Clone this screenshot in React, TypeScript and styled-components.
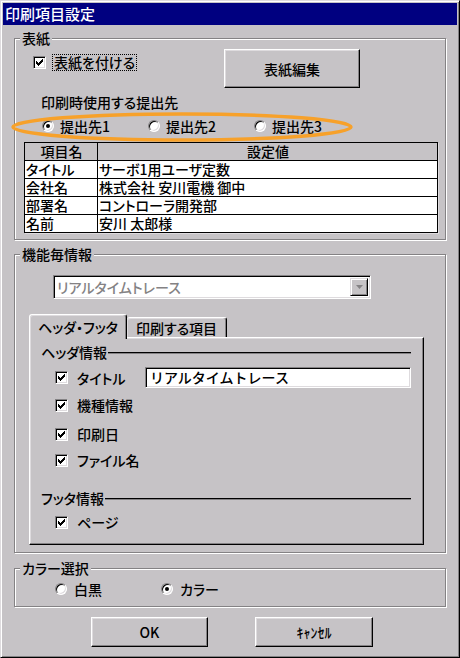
import { Fragment } from "react";
import styled, { createGlobalStyle } from "styled-components";

const FACE = "#c6c3c6";
const SHADOW = "#848284";
const LIGHT = "#dedbde";

const GlobalStyle = createGlobalStyle`
  html, body { margin: 0; padding: 0; background: ${FACE}; }
  * { box-sizing: border-box; }
`;

const Window = styled.div`
  width: 460px;
  height: 658px;
  padding: 2px;
  background: ${FACE};
  border: 1px solid;
  border-color: ${LIGHT} #000 #000 ${LIGHT};
  box-shadow: inset 1px 1px 0 #fff, inset -1px -1px 0 ${SHADOW};
  font-family: "Noto Sans CJK JP", "Noto Sans", sans-serif;
  font-size: 14px;
  font-weight: 500;
  line-height: 16px;
  color: #000;
  font-feature-settings: "palt";
  display: flex;
  flex-direction: column;
`;

const TitleBar = styled.div`
  height: 22px;
  background: #000080;
  color: #fff;
  font-size: 15px;
  display: flex;
  align-items: center;
  padding-left: 2px;
`;

const Body = styled.div`
  display: flex;
  flex-direction: column;
  padding-left: 11px;
`;

const Group = styled.div<{ $mt: number; $h: number }>`
  position: relative;
  margin-top: ${(p) => p.$mt}px;
  height: ${(p) => p.$h}px;
  width: 432px;
  border: 1px solid ${SHADOW};
  box-shadow: inset 1px 1px 0 #fff, 1px 1px 0 #fff;
  display: flex;
  flex-direction: column;
  align-items: flex-start;
`;

const GroupLabel = styled.div`
  margin: -9px 0 0 5px;
  padding: 0 2px;
  background: ${FACE};
  line-height: 16px;
`;

const CoverRow = styled.div`
  display: flex;
  justify-content: space-between;
  align-items: flex-start;
  width: 100%;
  margin-top: 3px;
  padding: 0 85px 0 18px;
`;

const CheckLabel = styled.label<{ $gap: number; $mt?: number }>`
  display: inline-flex;
  align-items: center;
  gap: ${(p) => p.$gap}px;
  margin-top: ${(p) => p.$mt ?? 0}px;
`;

const FocusText = styled.span`
  border: 1px dotted #000;
  padding: 0 1px;
  line-height: 15px;
`;

const Box = styled.span`
  flex: none;
  width: 13px;
  height: 13px;
  background: #fff;
  border: 1px solid;
  border-color: ${SHADOW} #fff #fff ${SHADOW};
  box-shadow: inset 1px 1px 0 #000, inset -1px -1px 0 ${LIGHT};
  display: flex;
  align-items: center;
  justify-content: center;
`;

const PushButton = styled.button<{ $w: number; $h: number }>`
  width: ${(p) => p.$w}px;
  height: ${(p) => p.$h}px;
  padding: 0;
  font: inherit;
  color: #000;
  background: ${FACE};
  border: 1px solid;
  border-color: #fff #000 #000 #fff;
  box-shadow: inset -1px -1px 0 ${SHADOW}, inset 1px 1px 0 ${LIGHT};
`;

const SubLabel = styled.div`
  margin-top: 6px;
  padding-left: 26px;
`;

const RadioRow = styled.div<{ $mt: number; $pl: number }>`
  display: flex;
  margin-top: ${(p) => p.$mt}px;
  padding-left: ${(p) => p.$pl}px;
`;

const RadioItem = styled.label<{ $gap: number }>`
  width: 106px;
  display: flex;
  align-items: center;
  gap: ${(p) => p.$gap}px;
  height: 16px;
`;

const RadioCircle = styled.span<{ $on?: boolean }>`
  flex: none;
  width: 12px;
  height: 12px;
  border-radius: 50%;
  background: #fff;
  border: 1px solid;
  border-color: ${SHADOW} #fff #fff ${SHADOW};
  box-shadow: inset 1px 1px 0 #000, inset -1px -1px 0 ${LIGHT};
  display: flex;
  align-items: center;
  justify-content: center;

  &::after {
    content: "";
    width: 4px;
    height: 4px;
    border-radius: 50%;
    background: #000;
    display: ${(p) => (p.$on ? "block" : "none")};
  }
`;

const Highlight = styled.svg`
  position: absolute;
  left: -5px;
  top: 73px;
  pointer-events: none;
`;

const InfoGrid = styled.div`
  display: grid;
  grid-template-columns: 73px 340px;
  margin: 8px 0 0 9px;
  border-top: 1px solid #000;
  border-left: 1px solid #000;
  box-shadow: 1px 1px 0 ${LIGHT};
`;

const Cell = styled.div<{ $head?: boolean }>`
  height: 18px;
  border-right: 1px solid #000;
  border-bottom: 1px solid #000;
  background: ${(p) => (p.$head ? FACE : "#fff")};
  text-align: ${(p) => (p.$head ? "center" : "left")};
  padding-left: 1px;
  line-height: 17px;
  white-space: nowrap;
`;

const Combo = styled.div`
  margin: 13px 0 0 38px;
  width: 318px;
  height: 24px;
  padding: 2px;
  background: #fff;
  border: 1px solid;
  border-color: ${SHADOW} #fff #fff ${SHADOW};
  box-shadow: inset 1px 1px 0 #000, inset -1px -1px 0 ${LIGHT};
  display: flex;
  align-items: center;
`;

const ComboText = styled.span`
  flex: 1;
  color: ${SHADOW};
  padding-left: 1px;
`;

const ComboButton = styled.span`
  width: 18px;
  height: 18px;
  background: ${FACE};
  border: 1px solid;
  border-color: ${LIGHT} #000 #000 ${LIGHT};
  box-shadow: inset 1px 1px 0 #fff, inset -1px -1px 0 ${SHADOW};
  display: flex;
  align-items: center;
  justify-content: center;
`;

const TabStrip = styled.div`
  display: flex;
  align-items: flex-end;
  margin: 15px 0 0 14px;
`;

const Tab = styled.div<{ $active?: boolean; $w: number }>`
  position: relative;
  z-index: ${(p) => (p.$active ? 1 : 0)};
  width: ${(p) => p.$w}px;
  height: ${(p) => (p.$active ? 25 : 20)}px;
  margin-bottom: ${(p) => (p.$active ? -2 : 0)}px;
  padding-bottom: ${(p) => (p.$active ? 1 : 0)}px;
  background: ${FACE};
  border: 1px solid;
  border-bottom: none;
  border-left-width: ${(p) => (p.$active ? 1 : 0)}px;
  border-color: #fff #000 transparent #fff;
  border-radius: 3px 3px 0 0;
  box-shadow: inset -1px 0 0 ${SHADOW}, inset 1px 1px 0 ${LIGHT};
  display: flex;
  align-items: center;
  justify-content: center;
`;

const TabPanel = styled.div`
  width: 395px;
  height: 208px;
  margin-left: 14px;
  padding: 6px 12px 0 11px;
  border: 1px solid;
  border-color: #fff #000 #000 #fff;
  box-shadow: inset -1px -1px 0 ${SHADOW}, inset 1px 1px 0 ${LIGHT};
  display: flex;
  flex-direction: column;
`;

const SectionHead = styled.div<{ $mt: number }>`
  display: flex;
  align-items: center;
  gap: 1px;
  margin-top: ${(p) => p.$mt}px;
`;

const Rule = styled.span`
  flex: 1;
  height: 2px;
  border-top: 1px solid #000;
  border-bottom: 1px solid ${SHADOW};
  margin-top: 1px;
`;

const CheckRow = styled.div<{ $mt: number; $h?: number }>`
  display: flex;
  align-items: center;
  gap: 9px;
  height: ${(p) => p.$h ?? 16}px;
  margin-top: ${(p) => p.$mt}px;
  padding-left: 14px;
`;

const TextField = styled.div`
  margin-left: auto;
  width: 266px;
  height: 21px;
  padding-left: 4px;
  background: #fff;
  border: 1px solid;
  border-color: ${SHADOW} #fff #fff ${SHADOW};
  box-shadow: inset 1px 1px 0 #000, inset -1px -1px 0 ${LIGHT};
  line-height: 19px;
  font-feature-settings: normal;
`;

const ButtonRow = styled.div`
  display: flex;
  justify-content: center;
  gap: 47px;
  margin-top: 10px;
  padding-left: 4px;
`;

// classic 7x7 check mark, one 3px column per x
const checkCols = [2, 3, 4, 3, 2, 1, 0];

const Check = () => (
  <Box>
    <svg width="7" height="7" viewBox="0 0 7 7" shapeRendering="crispEdges">
      {checkCols.map((y, x) => (
        <rect key={x} x={x} y={y} width="1" height="3" fill="#000" />
      ))}
    </svg>
  </Box>
);

const rows = [
  ["タイトル", "サーボ1用ユーザ定数"],
  ["会社名", "株式会社 安川電機 御中"],
  ["部署名", "コントローラ開発部"],
  ["名前", "安川 太郎様"],
];

const headerItems = ["機種情報", "印刷日", "ファイル名"];
const headerGaps = [9, 13, 10];

export default function App() {
  return (
    <>
      <GlobalStyle />
      <Window>
        <TitleBar>印刷項目設定</TitleBar>
        <Body>
          <Group $mt={13} $h={202}>
            <GroupLabel>表紙</GroupLabel>
            <CoverRow>
              <CheckLabel $gap={6} $mt={5}>
                <Check />
                <FocusText>表紙を付ける</FocusText>
              </CheckLabel>
              <PushButton $w={136} $h={39}>表紙編集</PushButton>
            </CoverRow>
            <SubLabel>印刷時使用する提出先</SubLabel>
            <RadioRow $mt={8} $pl={27}>
              <RadioItem $gap={6}><RadioCircle $on />提出先1</RadioItem>
              <RadioItem $gap={6}><RadioCircle />提出先2</RadioItem>
              <RadioItem $gap={6}><RadioCircle />提出先3</RadioItem>
            </RadioRow>
            <Highlight width="346" height="32" viewBox="0 0 346 32">
              <ellipse cx="172" cy="15" rx="169" ry="13" fill="none" stroke="#f7a12a" strokeWidth="3.5" />
            </Highlight>
            <InfoGrid>
              <Cell $head>項目名</Cell>
              <Cell $head>設定値</Cell>
              {rows.map(([k, v]) => (
                <Fragment key={k}>
                  <Cell>{k}</Cell>
                  <Cell>{v}</Cell>
                </Fragment>
              ))}
            </InfoGrid>
          </Group>

          <Group $mt={14} $h={299}>
            <GroupLabel>機能毎情報</GroupLabel>
            <Combo>
              <ComboText>リアルタイムトレース</ComboText>
              <ComboButton>
                <svg width="7" height="4" viewBox="0 0 7 4">
                  <path d="M0 0h7L3.5 4z" fill={SHADOW} />
                </svg>
              </ComboButton>
            </Combo>
            <TabStrip>
              <Tab $active $w={98}>ヘッダ・フッタ</Tab>
              <Tab $w={100}>印刷する項目</Tab>
            </TabStrip>
            <TabPanel>
              <SectionHead $mt={0}>
                ヘッダ情報
                <Rule />
              </SectionHead>
              <CheckRow $mt={7} $h={21}>
                <Check />
                タイトル
                <TextField>リアルタイムトレース</TextField>
              </CheckRow>
              {headerItems.map((t, i) => (
                <CheckRow key={t} $mt={headerGaps[i]}>
                  <Check />
                  {t}
                </CheckRow>
              ))}
              <SectionHead $mt={22}>
                フッタ情報
                <Rule />
              </SectionHead>
              <CheckRow $mt={8}>
                <Check />
                ページ
              </CheckRow>
            </TabPanel>
          </Group>

          <Group $mt={15} $h={39}>
            <GroupLabel>カラー選択</GroupLabel>
            <RadioRow $mt={5} $pl={40}>
              <RadioItem $gap={7}><RadioCircle />白黒</RadioItem>
              <RadioItem $gap={7}><RadioCircle $on />カラー</RadioItem>
            </RadioRow>
          </Group>
        </Body>
        <ButtonRow>
          <PushButton $w={117} $h={30}>OK</PushButton>
          <PushButton $w={118} $h={30}>ｷｬﾝｾﾙ</PushButton>
        </ButtonRow>
      </Window>
    </>
  );
}
